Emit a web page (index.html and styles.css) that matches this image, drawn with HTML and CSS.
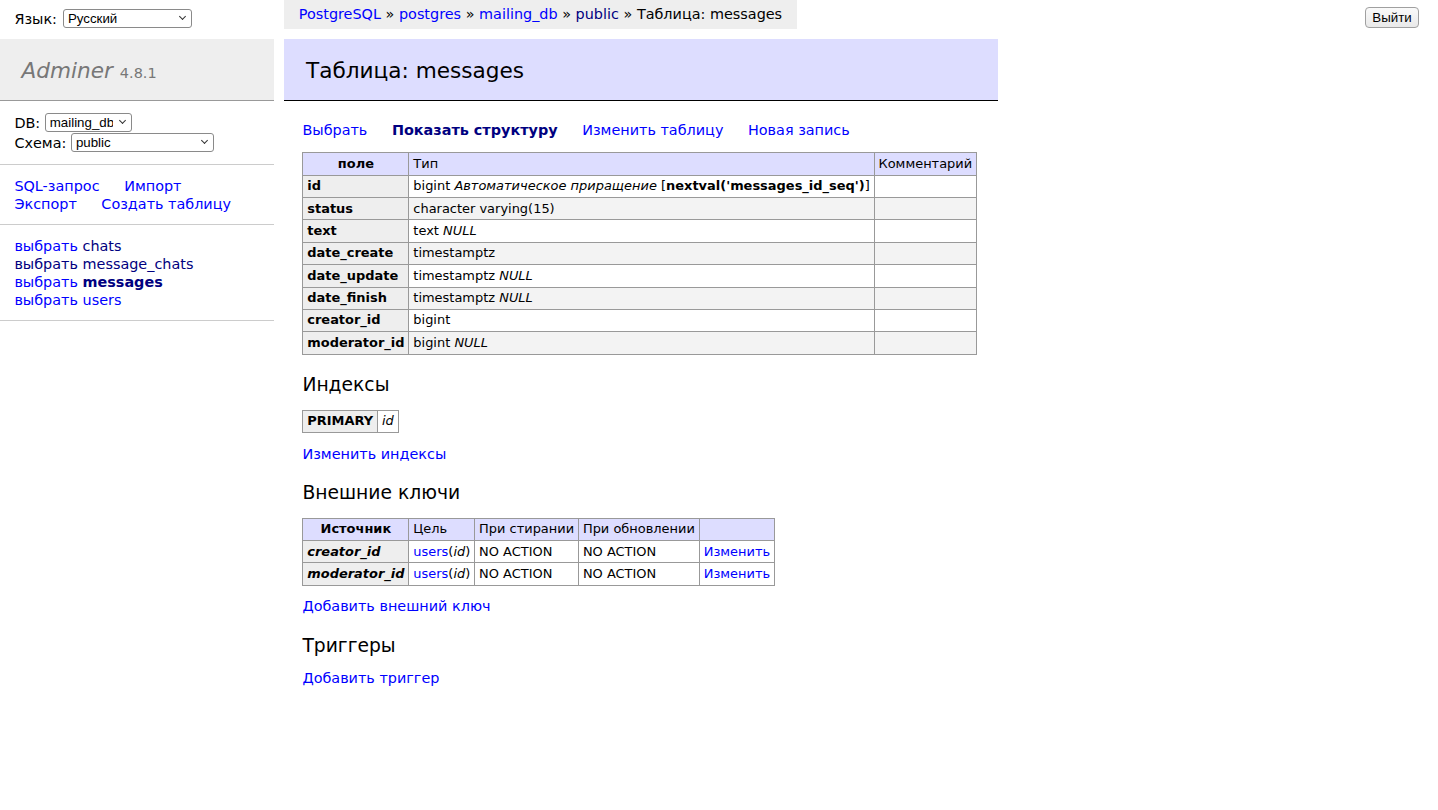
FILE: index.html
```html
<!DOCTYPE html>
<html lang="ru">
<head>
<meta charset="utf-8">
<title>Таблица: messages - mailing_db - Adminer</title>
<link rel="stylesheet" href="styles.css">
</head>
<body class="page">
<aside class="sidebar">
  <div class="lang"><span class="lang-label">Язык:</span> <span class="select-wrap"><select class="sel sel-lang"><option>Русский</option></select></span></div>
  <div class="menu">
    <h1 class="brand"><a class="brand-name" href="#">Adminer</a> <span class="version">4.8.1</span></h1>
    <div class="dbs">
      <div class="dbs-row">DB: <span class="select-wrap"><select class="sel sel-db"><option>mailing_db</option></select></span></div>
      <div class="dbs-row">Схема: <span class="select-wrap"><select class="sel sel-schema"><option>public</option></select></span></div>
    </div>
    <p class="menu-links"><a href="#">SQL-запрос</a> <a href="#">Импорт</a><br><a href="#">Экспорт</a> <a href="#">Создать таблицу</a></p>
    <ul class="tables">
      <li><a href="#">выбрать</a> <a class="visited" href="#">chats</a></li>
      <li><a class="visited" href="#">выбрать</a> <a class="visited" href="#">message_chats</a></li>
      <li><a href="#">выбрать</a> <a class="visited active" href="#">messages</a></li>
      <li><a href="#">выбрать</a> <a href="#">users</a></li>
    </ul>
  </div>
</aside>
<main class="main">
  <p class="breadcrumb"><a href="#">PostgreSQL</a> » <a href="#">postgres</a> » <a href="#">mailing_db</a> » <a class="visited" href="#">public</a> » Таблица: messages</p>
  <h2 class="title">Таблица: messages</h2>
  <div class="body">
    <p class="links"><a href="#">Выбрать</a> <a class="visited active" href="#">Показать структуру</a> <a href="#">Изменить таблицу</a> <a href="#">Новая запись</a></p>
    <table class="grid odds">
      <thead><tr><th>поле</th><td>Тип</td><td>Комментарий</td></tr></thead>
      <tbody>
        <tr><th>id</th><td>bigint <i>Автоматическое приращение</i> [<b>nextval('messages_id_seq')</b>]</td><td></td></tr>
        <tr><th>status</th><td>character varying(15)</td><td></td></tr>
        <tr><th>text</th><td>text <i>NULL</i></td><td></td></tr>
        <tr><th>date_create</th><td>timestamptz</td><td></td></tr>
        <tr><th>date_update</th><td>timestamptz <i>NULL</i></td><td></td></tr>
        <tr><th>date_finish</th><td>timestamptz <i>NULL</i></td><td></td></tr>
        <tr><th>creator_id</th><td>bigint</td><td></td></tr>
        <tr><th>moderator_id</th><td>bigint <i>NULL</i></td><td></td></tr>
      </tbody>
    </table>
    <h3 class="section">Индексы</h3>
    <table class="grid">
      <tbody><tr><th>PRIMARY</th><td><i>id</i></td></tr></tbody>
    </table>
    <p class="links"><a href="#">Изменить индексы</a></p>
    <h3 class="section">Внешние ключи</h3>
    <table class="grid">
      <thead><tr><th>Источник</th><td>Цель</td><td>При стирании</td><td>При обновлении</td><td></td></tr></thead>
      <tbody>
        <tr><th><i>creator_id</i></th><td><a href="#">users</a>(<i>id</i>)</td><td>NO ACTION</td><td>NO ACTION</td><td><a href="#">Изменить</a></td></tr>
        <tr><th><i>moderator_id</i></th><td><a href="#">users</a>(<i>id</i>)</td><td>NO ACTION</td><td>NO ACTION</td><td><a href="#">Изменить</a></td></tr>
      </tbody>
    </table>
    <p class="links"><a href="#">Добавить внешний ключ</a></p>
    <h3 class="section">Триггеры</h3>
    <p class="links"><a href="#">Добавить триггер</a></p>
  </div>
</main>
<div class="logout-wrap"><button class="logout" type="button">Выйти</button></div>
</body>
</html>
```

FILE: styles.css
```css
html, body { margin: 0; padding: 0; }
.page {
  display: flex;
  align-items: flex-start;
  color: #000;
  background: #fff;
  font: 14.4px/1.25 "DejaVu Sans", Verdana, sans-serif;
}
a { color: #00f; text-decoration: none; }
a.visited { color: #000080; }
a.active { font-weight: bold; }

/* sidebar */
.sidebar { width: 273.6px; flex: none; }
.lang {
  box-sizing: content-box;
  display: flex;
  align-items: center;
  gap: 6px;
  height: 19px;
  padding: 9px 14.4px 10.8px;
}
.select-wrap { position: relative; display: inline-block; line-height: 0; }
.select-wrap::after {
  content: "";
  position: absolute;
  right: 7px;
  top: 5px;
  width: 4px;
  height: 4px;
  border-right: 1.2px solid #333;
  border-bottom: 1.2px solid #333;
  transform: rotate(45deg);
  pointer-events: none;
}
.sel {
  -webkit-appearance: none;
  appearance: none;
  box-sizing: border-box;
  height: 19px;
  margin: 0;
  padding: 0 18px 0 4px;
  border: 1px solid #8a8a8a;
  border-radius: 3px;
  background: #fff;
  color: #000;
  font: 13.3px/17px "Liberation Sans", Arial, sans-serif;
}
.sel-lang { width: 129px; }
.sel-db { width: 87px; }
.sel-schema { width: 143px; }

.brand {
  margin: 0;
  padding: 19.28px 21.6px 15.28px;
  font-size: 21.6px;
  line-height: 1.25;
  font-weight: normal;
  color: #777;
  background: #eee;
  border-bottom: 1px solid #999;
}
.brand-name { color: #777; font-style: italic; }
.version { font-size: 67%; color: #777; }
.dbs, .menu-links, .tables {
  margin: 0;
  padding: 11.52px 14.4px;
  border-bottom: 1px solid #ccc;
}
.dbs-row {
  display: flex;
  align-items: center;
  height: 20px;
  white-space: pre;
}
.menu-links a { margin-right: 20px; white-space: nowrap; }
.tables { list-style: none; white-space: nowrap; }
.tables li { list-style: none; }

/* main */
.main { margin-left: 10.8px; width: 713.6px; flex: none; }
.breadcrumb {
  width: fit-content;
  box-sizing: border-box;
  height: 28.8px;
  margin: 0 0 10px;
  padding: 2px 14.4px 0;
  line-height: 25.92px;
  white-space: nowrap;
  background: #eee;
}
.title {
  margin: 0 0 20px;
  padding: 19.28px 21.6px 15.28px;
  font-size: 21.6px;
  line-height: 1.25;
  font-weight: normal;
  color: #000;
  background: #ddf;
  border-bottom: 1px solid #000;
}
.body { padding-left: 18px; }
.links { margin: 11.52px 20px 0 0; }
.links a { margin-right: 20px; white-space: nowrap; }
.section {
  margin: 18.72px 0 0;
  font-size: 18.72px;
  line-height: 1.25;
  font-weight: normal;
}
.grid {
  margin: 12.96px 20px 0 0;
  border-collapse: collapse;
  font-size: 12.96px;
  line-height: 1.25;
}
.grid td, .grid th {
  border: 1px solid #999;
  padding: 2.6px 3.9px;
}
.grid th { background: #eee; text-align: left; }
.grid thead th { text-align: center; padding: 2.6px 6.5px; }
.grid thead td, .grid thead th { background: #ddf; }
.odds tbody tr:nth-child(2n) { background: #f3f3f3; }

/* logout */
.logout-wrap { margin: 7.2px 19px 0 auto; }
.logout {
  box-sizing: border-box;
  height: 21px;
  width: 54px;
  padding: 0;
  border: 1px solid #a0a0a0;
  border-radius: 4px;
  background: linear-gradient(#fafafa, #e9e9e9);
  color: #000;
  font: 13.3px/19px "Liberation Sans", Arial, sans-serif;
}
```
